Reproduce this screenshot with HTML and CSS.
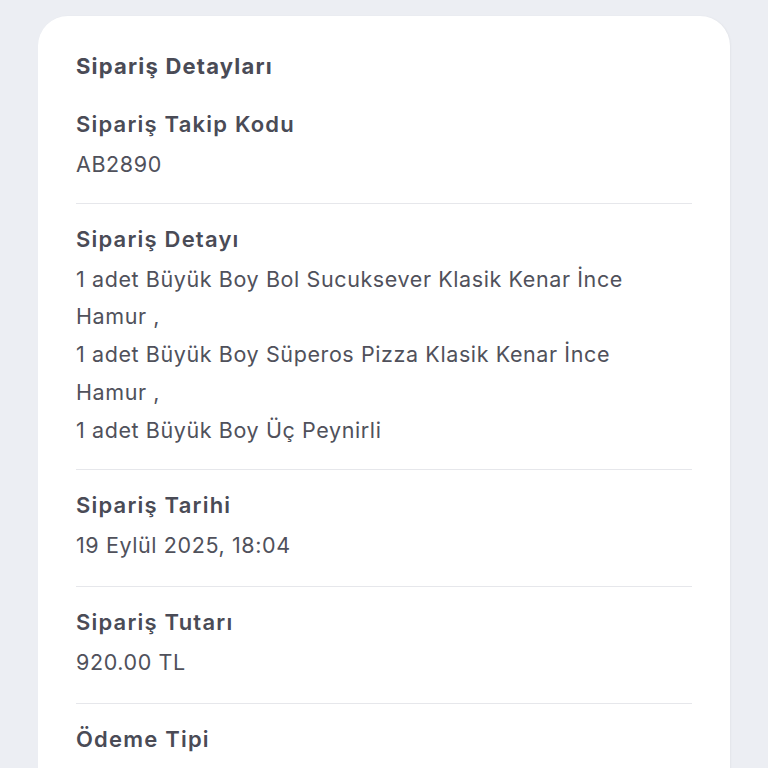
FILE: index.html
```html
<!DOCTYPE html>
<html lang="tr">
<head>
<meta charset="utf-8">
<link rel="stylesheet" href="styles.css">
</head>
<body>
<div class="page">
  <div class="card">
    <h1 class="title">Sipariş Detayları</h1>
    <div class="section">
      <div class="label">Sipariş Takip Kodu</div>
      <div class="value">AB2890</div>
    </div>
    <div class="section">
      <div class="label">Sipariş Detayı</div>
      <div class="value">1 adet Büyük Boy Bol Sucuksever Klasik Kenar İnce<br>Hamur ,<br>1 adet Büyük Boy Süperos Pizza Klasik Kenar İnce<br>Hamur ,<br>1 adet Büyük Boy Üç Peynirli</div>
    </div>
    <div class="section">
      <div class="label">Sipariş Tarihi</div>
      <div class="value">19 Eylül 2025, 18:04</div>
    </div>
    <div class="section">
      <div class="label">Sipariş Tutarı</div>
      <div class="value">920.00 TL</div>
    </div>
    <div class="section last">
      <div class="label">Ödeme Tipi</div>
    </div>
  </div>
</div>
</body>
</html>
```
FILE: styles.css
```css
html, body {
  margin: 0;
  padding: 0;
  background: #eceef3;
}
body {
  font-family: Inter, "Open Sans", sans-serif;
  color: #4b4c57;
}
.page {
  padding: 16px 38px 0 38px;
  height: 768px;
  box-sizing: border-box;
  overflow: hidden;
}
.card {
  background: #ffffff;
  border-radius: 30px;
  padding: 31px 38px 40px 38px;
  box-shadow: 1px 0 2px rgba(0,0,0,0.04);
}
.title {
  margin: 0 0 20px 0;
  font-size: 22px;
  line-height: 38px;
  font-weight: 700;
  letter-spacing: 1.2px;
  color: #4a4b56;
}
.section {
  padding: 16px 0 20px 0;
  border-bottom: 1px solid #e6e7eb;
}
.section:first-of-type {
  padding-top: 0;
  padding-bottom: 19px;
}
.section + .section + .section {
  padding-bottom: 21px;
}
.label {
  font-size: 22px;
  line-height: 38px;
  font-weight: 600;
  letter-spacing: 1.2px;
  color: #4a4b56;
  margin-bottom: 3px;
}
.value {
  font-size: 21.5px;
  line-height: 37.7px;
  font-weight: 400;
  letter-spacing: 0.6px;
  color: #50515b;
}
.section.last {
  border-bottom: none;
}
```
